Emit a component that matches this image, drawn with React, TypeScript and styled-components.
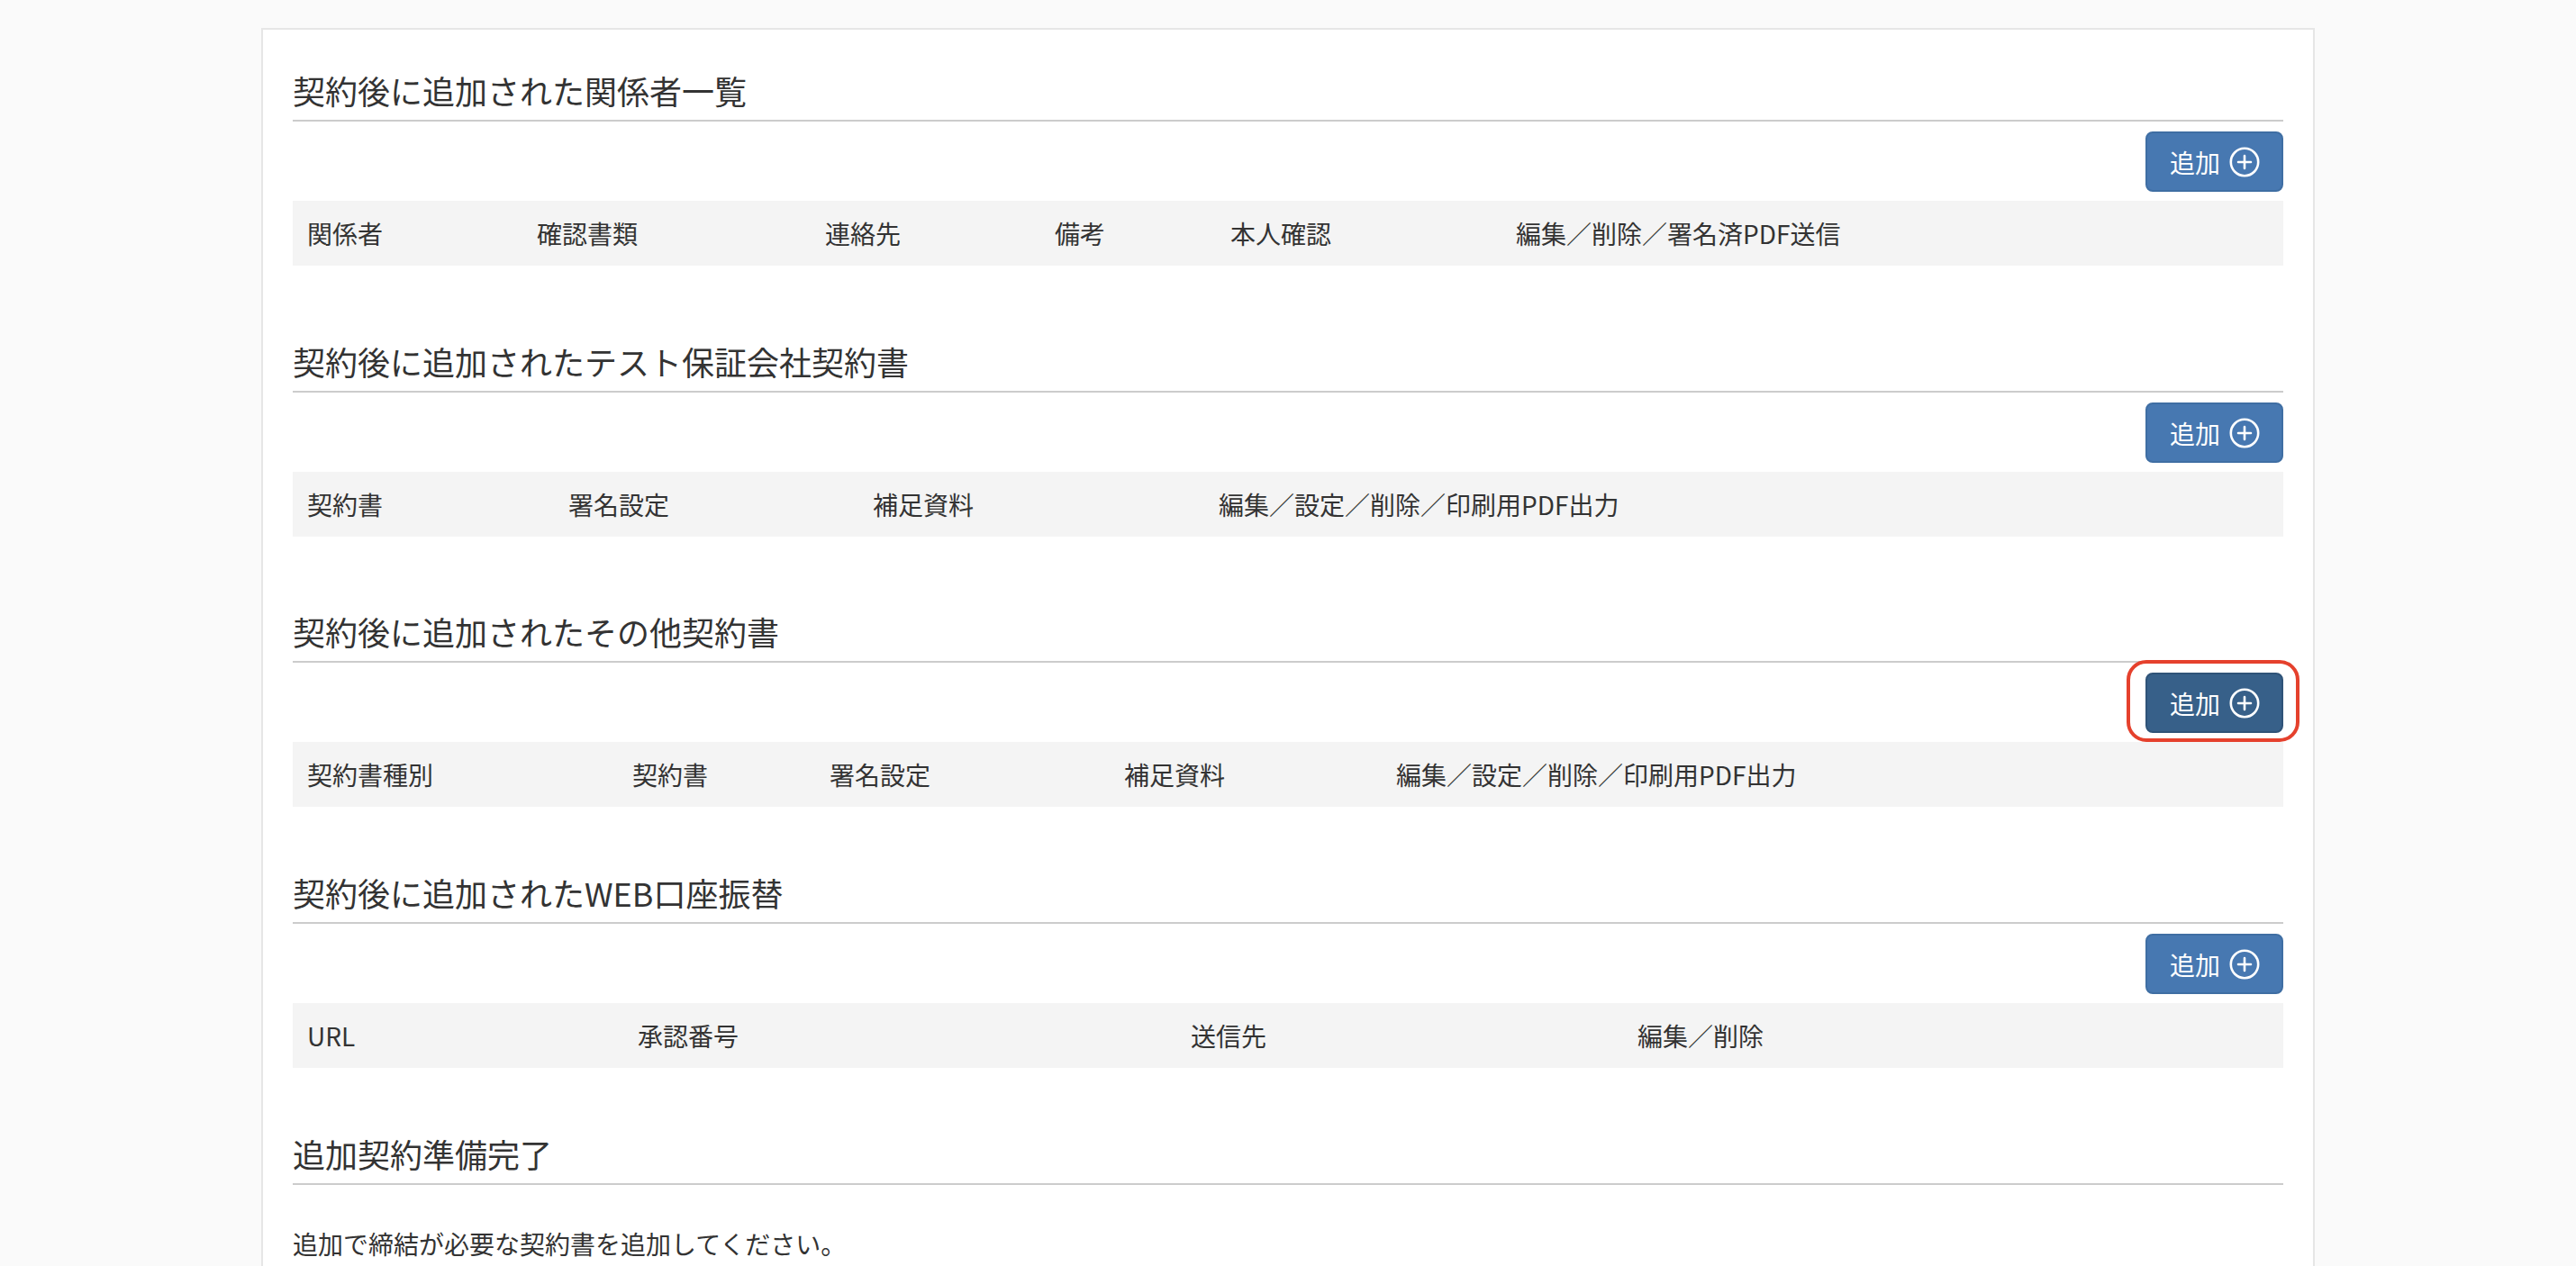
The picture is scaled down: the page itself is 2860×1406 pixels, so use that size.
import React from 'react';
import styled, { createGlobalStyle } from 'styled-components';

const GlobalStyle = createGlobalStyle`
  html, body {
    margin: 0;
    padding: 0;
    background: #fafafa;
  }
  body {
    font-family: "Noto Sans CJK JP", "Noto Sans", sans-serif;
    color: #333;
  }
`;

interface SectionData {
  title: string;
  columns: Array<{ label: string; width?: number }>;
  active?: boolean;
  after: number;
}

const sections: SectionData[] = [
  {
    title: '契約後に追加された関係者一覧',
    columns: [
      { label: '関係者', width: 255 },
      { label: '確認書類', width: 320 },
      { label: '連絡先', width: 255 },
      { label: '備考', width: 195 },
      { label: '本人確認', width: 317 },
      { label: '編集／削除／署名済PDF送信' },
    ],
    after: 84,
  },
  {
    title: '契約後に追加されたテスト保証会社契約書',
    columns: [
      { label: '契約書', width: 290 },
      { label: '署名設定', width: 338 },
      { label: '補足資料', width: 384 },
      { label: '編集／設定／削除／印刷用PDF出力' },
    ],
    after: 83,
  },
  {
    title: '契約後に追加されたその他契約書',
    columns: [
      { label: '契約書種別', width: 361 },
      { label: '契約書', width: 219 },
      { label: '署名設定', width: 327 },
      { label: '補足資料', width: 302 },
      { label: '編集／設定／削除／印刷用PDF出力' },
    ],
    active: true,
    after: 73,
  },
  {
    title: '契約後に追加されたWEB口座振替',
    columns: [
      { label: 'URL', width: 367 },
      { label: '承認番号', width: 614 },
      { label: '送信先', width: 496 },
      { label: '編集／削除' },
    ],
    after: 73,
  },
];

const Page = styled.div`
  padding: 31px 0 0;
  min-height: 1406px;
  box-sizing: border-box;
`;

const Card = styled.div`
  width: 2280px;
  margin: 0 auto;
  box-sizing: border-box;
  background: #fff;
  border: 2px solid #e6e6e6;
  border-bottom: none;
  padding: 45px 33px 80px;
`;

const Section = styled.section<{ $after: number }>`
  margin-bottom: ${(p) => p.$after}px;
`;

const SectionTitle = styled.h2`
  margin: 0;
  font-size: 36px;
  font-weight: 400;
  line-height: 44px;
  padding-bottom: 11px;
  border-bottom: 2px solid #cccccc;
  color: #333;
`;

const Toolbar = styled.div`
  display: flex;
  justify-content: flex-end;
  margin-top: 11px;
  margin-bottom: 10px;
`;

const AddButton = styled.button<{ $active?: boolean }>`
  position: relative;
  display: inline-flex;
  align-items: center;
  gap: 10px;
  height: 67px;
  padding: 0 24px 0 25px;
  box-sizing: border-box;
  border-radius: 8px;
  border: 2px solid ${(p) => (p.$active ? '#2f5378' : '#3f6ea3')};
  background: ${(p) => (p.$active ? '#376089' : '#4778b1')};
  color: #fff;
  font-family: "Noto Sans CJK JP", sans-serif;
  font-size: 28px;
  line-height: 1;
  cursor: pointer;

  ${(p) =>
    p.$active &&
    `
    &::after {
      content: '';
      position: absolute;
      top: -16px;
      bottom: -12px;
      left: -23px;
      right: -20px;
      border: 4px solid #e5412d;
      border-radius: 22px;
      pointer-events: none;
    }
  `}
`;

const Table = styled.table`
  width: 100%;
  border-collapse: collapse;
  table-layout: fixed;
`;

const HeadRow = styled.tr`
  background: #f4f4f4;
`;

const HeadCell = styled.th`
  box-sizing: border-box;
  text-align: left;
  font-weight: 400;
  font-size: 28px;
  line-height: 40px;
  padding: 16px;
  color: #333;
  white-space: nowrap;
`;

const Note = styled.p`
  margin: 45px 0 0;
  font-size: 28px;
  line-height: 40px;
  color: #333;
`;

const PlusCircle: React.FC = () => (
  <svg width="34" height="34" viewBox="0 0 34 34" fill="none">
    <circle cx="17" cy="17" r="15.2" stroke="#fff" strokeWidth="2.6" />
    <path d="M17 10v14M10 17h14" stroke="#fff" strokeWidth="2.6" strokeLinecap="round" />
  </svg>
);

const App: React.FC = () => {
  return (
    <Page>
      <GlobalStyle />
      <Card>
        {sections.map((section, index) => (
          <Section key={index} $after={section.after}>
            <SectionTitle>{section.title}</SectionTitle>
            <Toolbar>
              <AddButton type="button" $active={section.active}>
                追加
                <PlusCircle />
              </AddButton>
            </Toolbar>
            <Table>
              <thead>
                <HeadRow>
                  {section.columns.map((col, colIndex) => (
                    <HeadCell key={colIndex} style={col.width ? { width: col.width } : undefined}>
                      {col.label}
                    </HeadCell>
                  ))}
                </HeadRow>
              </thead>
            </Table>
          </Section>
        ))}

        <Section $after={0}>
          <SectionTitle>追加契約準備完了</SectionTitle>
          <Note>追加で締結が必要な契約書を追加してください。</Note>
        </Section>
      </Card>
    </Page>
  );
};

export default App;
